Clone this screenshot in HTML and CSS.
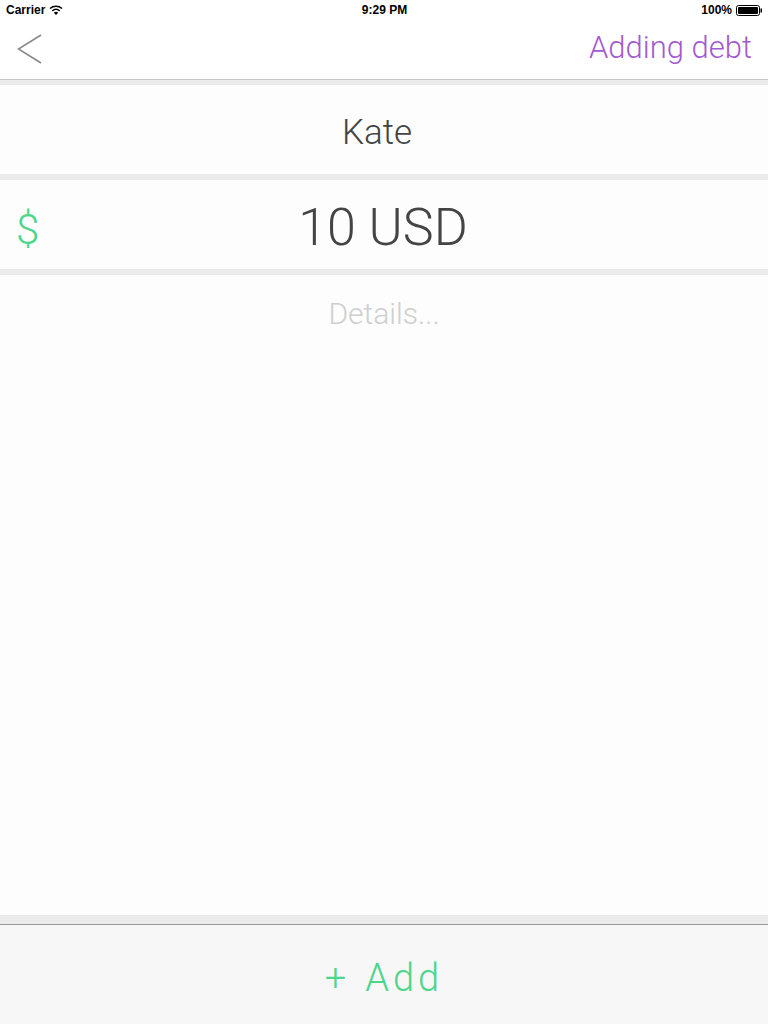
FILE: index.html
```html
<!DOCTYPE html>
<html lang="en">
<head>
  <meta charset="UTF-8" />
  <meta name="viewport" content="width=device-width, initial-scale=1.0"/>
  <title>Adding debt</title>
  <link rel="stylesheet" href="styles.css">
</head>
<body>
  <div class="status-bar">
    <div class="status-left">
      <span>Carrier</span>
      <svg class="wifi" width="14" height="10" viewBox="0 0 14 10">
        <path d="M1 3.5 A9 9 0 0 1 13 3.5" fill="none" stroke="#000" stroke-width="1.6"/>
        <path d="M3.3 5.8 A5.8 5.8 0 0 1 10.7 5.8" fill="none" stroke="#000" stroke-width="1.6"/>
        <path d="M7 10 L4.9 7.7 A3 3 0 0 1 9.1 7.7 Z" fill="#000"/>
      </svg>
    </div>
    <div class="status-time">9:29 PM</div>
    <div class="status-right">
      <span>100%</span>
      <svg width="27" height="11" viewBox="0 0 27 11">
        <rect x="0.5" y="0.5" width="23" height="10" rx="2" fill="none" stroke="#000"/>
        <rect x="2" y="2" width="20" height="7" rx="1" fill="#000"/>
        <rect x="24.5" y="3.5" width="1.5" height="4" fill="#000"/>
      </svg>
    </div>
  </div>

  <header class="nav-bar">
    <svg class="back" width="26" height="32" viewBox="0 0 26 32">
      <polyline points="24,2 1.5,16 24,30" fill="none" stroke="#8a8a8a" stroke-width="1.6"/>
    </svg>
    <div class="nav-title">Adding debt</div>
  </header>

  <div class="field name-field">Kate</div>
  <div class="field amount-field">
    <span class="currency">$</span>
    <span class="amount">10 USD</span>
  </div>
  <div class="details">Details...</div>

  <footer class="add-bar">
    <span class="plus">+</span>
    <span class="add">Add</span>
  </footer>
</body>
</html>
```

FILE: styles.css
```css
body {
  margin: 0;
  width: 768px;
  height: 1024px;
  display: flex;
  flex-direction: column;
  background: #ebebeb;
  font-family: Roboto, 'Open Sans', sans-serif;
  font-weight: 300;
  color: #444;
}
.status-bar {
  height: 20px;
  background: #fff;
  display: flex;
  align-items: center;
  justify-content: space-between;
  padding: 0 5px 0 6px;
  font-family: 'Liberation Sans', Arial, sans-serif;
  font-size: 12px;
  font-weight: bold;
  color: #000;
}
.status-left, .status-right {
  display: flex;
  align-items: center;
  gap: 4px;
  width: 120px;
}
.status-right {
  justify-content: flex-end;
}
.wifi {
  margin-top: -1px;
}
.nav-bar {
  height: 59px;
  background: #fff;
  border-bottom: 1px solid #c6c6c6;
  display: flex;
  align-items: center;
  justify-content: space-between;
  padding: 0 16px 0 17px;
  margin-bottom: 5px;
}
.back {
  margin-top: -2px;
}
.nav-title {
  font-size: 31px;
  color: #a45ad0;
  margin-top: -4px;
}
.field {
  height: 89px;
  background: #fdfdfd;
  display: flex;
  align-items: center;
  justify-content: center;
  margin-bottom: 6px;
  box-sizing: border-box;
}
.name-field {
  font-size: 35px;
  padding: 6px 14px 0 0;
}
.amount-field {
  position: relative;
  font-size: 52px;
  padding-top: 6px;
}
.amount {
  margin-left: -2px;
}
.currency {
  position: absolute;
  left: 16px;
  top: 25px;
  font-size: 42px;
  color: #4cd68a;
}
.details {
  flex: 1;
  background: #fdfdfd;
  text-align: center;
  font-size: 30px;
  color: #cfcfcf;
  padding-top: 21px;
  margin-bottom: 9px;
}
.add-bar {
  height: 100px;
  background: #f7f7f7;
  border-top: 1px solid #9a9a9a;
  display: flex;
  align-items: center;
  justify-content: center;
  gap: 19px;
  color: #4cd68a;
  font-size: 38px;
  padding-top: 6px;
  box-sizing: border-box;
}
.add {
  letter-spacing: 4px;
}
```
